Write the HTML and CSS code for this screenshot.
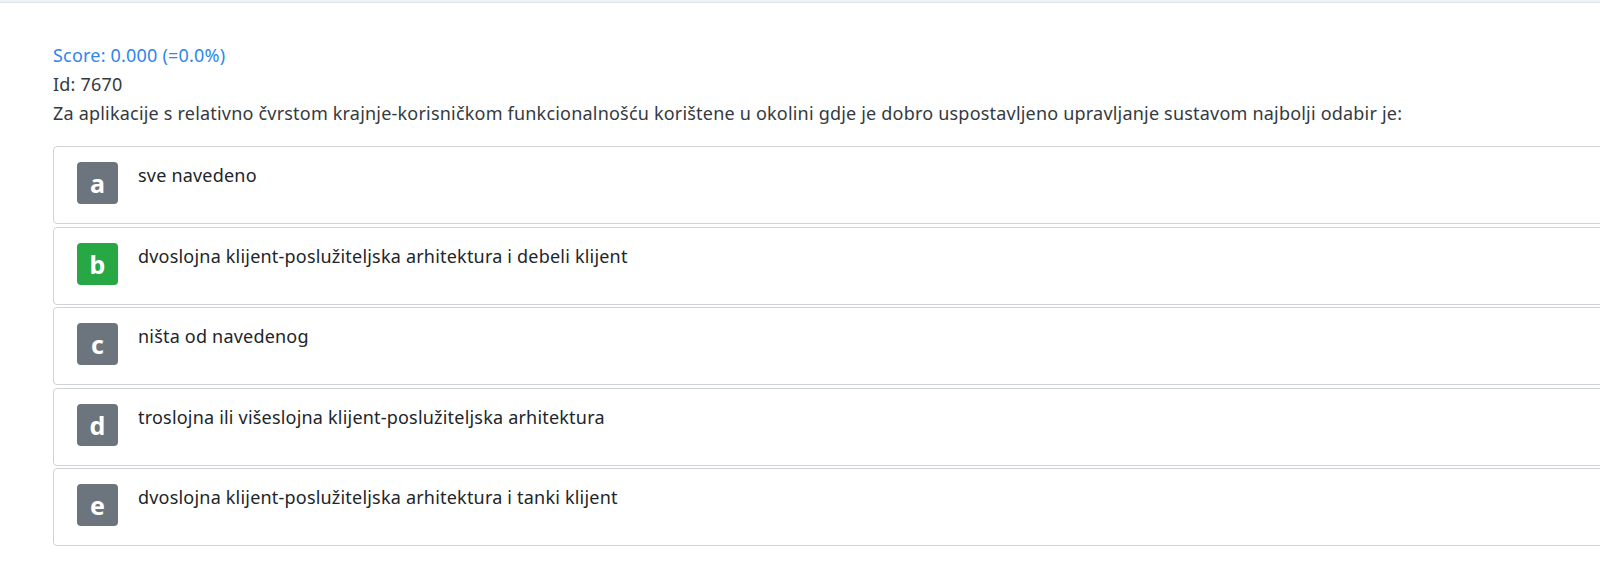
FILE: index.html
```html
<!DOCTYPE html>
<html lang="hr">
<head>
<meta charset="utf-8">
<title>Pitanje 7670</title>
<link rel="stylesheet" href="styles.css">
</head>
<body>
<div class="topbar"></div>
<main class="content">
  <div class="score">Score: 0.000 (=0.0%)</div>
  <div class="meta">Id: 7670</div>
  <div class="question">Za aplikacije s relativno čvrstom krajnje-korisničkom funkcionalnošću korištene u okolini gdje je dobro uspostavljeno upravljanje sustavom najbolji odabir je:</div>
  <div class="answers">
    <div class="answer"><span class="badge">a</span><span class="answer-text">sve navedeno</span></div>
    <div class="answer"><span class="badge badge-correct">b</span><span class="answer-text">dvoslojna klijent-poslužiteljska arhitektura i debeli klijent</span></div>
    <div class="answer"><span class="badge">c</span><span class="answer-text">ništa od navedenog</span></div>
    <div class="answer"><span class="badge">d</span><span class="answer-text">troslojna ili višeslojna klijent-poslužiteljska arhitektura</span></div>
    <div class="answer"><span class="badge">e</span><span class="answer-text">dvoslojna klijent-poslužiteljska arhitektura i tanki klijent</span></div>
  </div>
</main>
</body>
</html>
```
FILE: styles.css
```css
html, body {
  margin: 0;
  padding: 0;
  background: #ffffff;
  overflow: hidden;
}
body {
  font-family: "Noto Sans", "Open Sans", sans-serif;
  font-size: 18px;
  letter-spacing: 0.2px;
  color: #212529;
  width: 1600px;
  height: 584px;
}
.topbar {
  height: 2px;
  background: #eef1f5;
  border-bottom: 1px solid #dde3ea;
}
.content {
  padding: 38px 0 0 53px;
}
.score, .meta, .question {
  line-height: 29px;
}
.score {
  color: #2f86ec;
}
.meta, .question {
  color: #343a40;
}
.answers {
  margin-top: 18px;
  display: flex;
  flex-direction: column;
  gap: 2.5px;
}
.answer {
  width: 1560px;
  box-sizing: border-box;
  height: 78px;
  border: 1px solid #cfd3d7;
  border-radius: 4px;
  padding: 15px 23px;
  display: flex;
  align-items: flex-start;
  gap: 20px;
}
.badge {
  flex: none;
  width: 41px;
  height: 42px;
  border-radius: 4px;
  background: #6c757d;
  color: #ffffff;
  font-weight: 700;
  font-size: 25px;
  letter-spacing: 0;
  display: flex;
  align-items: center;
  justify-content: center;
}
.badge-correct {
  background: #28a745;
}
.answer-text {
  line-height: 26px;
  color: #212529;
}
```
